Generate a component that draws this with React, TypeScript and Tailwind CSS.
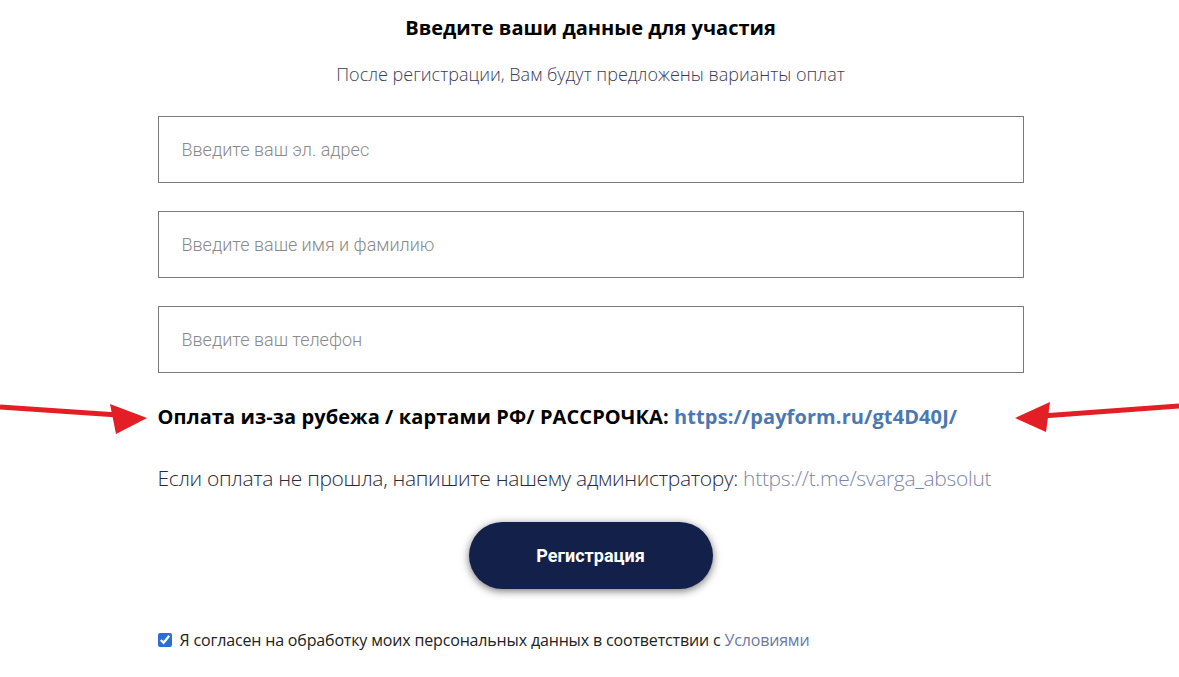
import { useState } from "react"

const openSans = { fontFamily: '"Open Sans", sans-serif' }

function Arrow({ dir }: { dir: "left" | "right" }) {
    // красная стрелка к строке оплаты
    if (dir === "right") {
        return (
            <svg className="absolute left-0 top-[398px]" width="150" height="40" viewBox="0 0 150 40">
                <path d="M0 9 L118 17" stroke="#e31e24" strokeWidth="5" fill="none" />
                <polygon points="147,20 110,6 116,36" fill="#e31e24" />
            </svg>
        )
    }
    return (
        <svg className="absolute left-[1012px] top-[394px]" width="167" height="40" viewBox="0 0 167 40">
            <path d="M167 12 L30 22" stroke="#e31e24" strokeWidth="5" fill="none" />
            <polygon points="3,24 38,8 34,38" fill="#e31e24" />
        </svg>
    )
}

export default function App() {
    const [agree, setAgree] = useState(true)

    return (
        <div className="relative min-h-[677px] w-full bg-white">
            <Arrow dir="right" />
            <Arrow dir="left" />
            <div className="mx-auto flex w-[866px] translate-x-px flex-col pt-[14px]" style={openSans}>
                <h2 className="text-center text-[20px] font-bold leading-[28px] text-black">Введите ваши данные для участия</h2>
                <p className="mt-[19px] text-center text-[18px] font-light leading-[26px] text-[#3b3b5c]">
                    После регистрации, Вам будут предложены варианты оплат
                </p>

                <div className="mt-[29px] flex flex-col gap-[28px] font-['Roboto']">
                    <input className="h-[67px] w-full border border-[#7a7a7a] px-[23px] text-[18px] font-light text-[#333] outline-none placeholder:text-[#8a8a8a]" placeholder="Введите ваш эл. адрес" />
                    <input className="h-[67px] w-full border border-[#7a7a7a] px-[23px] text-[18px] font-light text-[#333] outline-none placeholder:text-[#8a8a8a]" placeholder="Введите ваше имя и фамилию" />
                    <input className="h-[67px] w-full border border-[#7a7a7a] px-[23px] text-[18px] font-light text-[#333] outline-none placeholder:text-[#8a8a8a]" placeholder="Введите ваш телефон" />
                </div>

                <p className="mt-[30px] text-[20px] font-bold leading-[28px] tracking-[0.005em] text-black">
                    Оплата из-за рубежа / картами РФ/ РАССРОЧКА:{" "}
                    <a href="#" className="text-[#4a78b0]">https://payform.ru/gt4D40J/</a>
                </p>

                <p className="mt-[32px] whitespace-nowrap text-[21px] font-light leading-[30px] tracking-[-0.015em] text-[#2a2a3a]">
                    Если оплата не прошла, напишите нашему администратору:{" "}
                    <a href="#" className="text-[#7d88a8]">https://t.me/svarga_absolut</a>
                </p>

                <button className="mx-auto mt-[29px] h-[67px] w-[244px] rounded-full bg-[#13214a] font-['Roboto'] text-[18px] font-bold text-white shadow-[0_2px_8px_rgba(0,0,0,0.55)]">
                    Регистрация
                </button>

                <label className="mt-[39px] flex items-center gap-[8px] text-[16px] font-normal leading-[24px] tracking-[-0.01em] text-[#222]">
                    <input type="checkbox" checked={agree} onChange={() => setAgree(!agree)} className="h-[14px] w-[14px] accent-[#2a6fd6]" />
                    <span>
                        Я согласен на обработку моих персональных данных в соответствии с{" "}
                        <a href="#" className="text-[#6a78a8]">Условиями</a>
                    </span>
                </label>
            </div>
        </div>
    )
}
